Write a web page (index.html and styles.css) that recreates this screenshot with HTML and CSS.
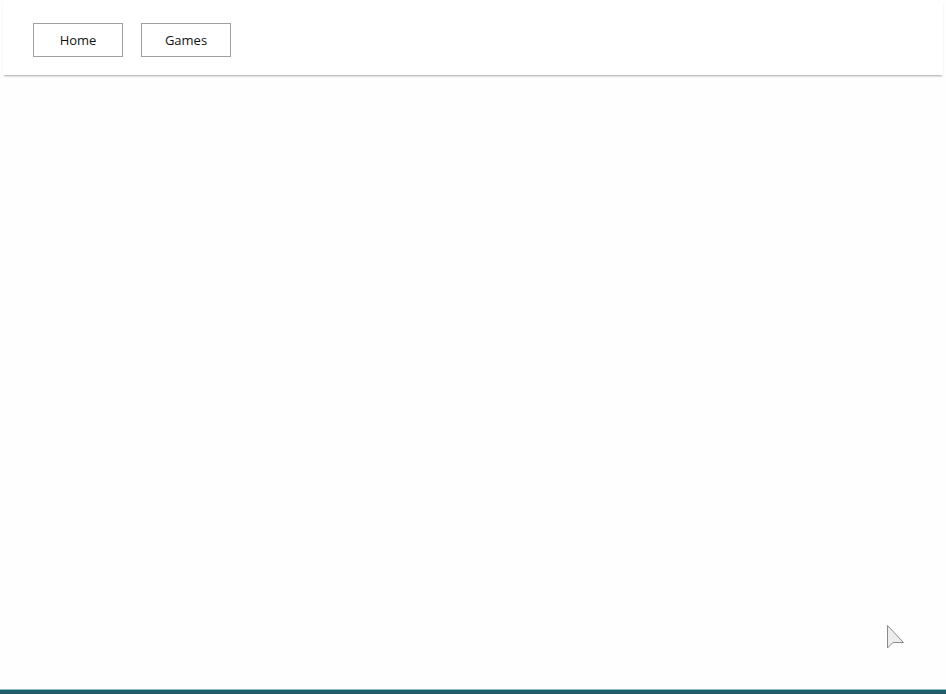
FILE: index.html
```html
<!DOCTYPE html>
<html>
<head>
<meta charset="utf-8">
<link rel="stylesheet" href="styles.css">
</head>
<body>
<div class="page">
  <header class="topbar">
    <nav class="nav">
      <button class="navbtn">Home</button>
      <button class="navbtn">Games</button>
    </nav>
  </header>
  <main class="content"></main>
  <div class="bottomline"></div>
</div>
<svg class="cursor" width="20" height="26" viewBox="0 0 20 26">
  <path d="M1.5 1.5 L1.5 24 L7 18.5 L17.5 18.5 Z" fill="#ececec" stroke="#8a8a8a" stroke-width="1"/>
</svg>
</body>
</html>
```
FILE: styles.css
```css
html, body {
  margin: 0;
  padding: 0;
  background: #fefefe;
  height: 100%;
}
body {
  font-family: "Open Sans", "Liberation Sans", sans-serif;
  overflow: hidden;
}
.page {
  display: flex;
  flex-direction: column;
  height: 694px;
}
.topbar {
  margin: 0 3px;
  height: 75px;
  background: #ffffff;
  box-shadow: 0 2px 2px -1px rgba(0,0,0,0.35);
  display: flex;
  align-items: center;
  padding-left: 30px;
  box-sizing: border-box;
}
.nav {
  display: flex;
  gap: 18px;
  margin-top: 4px;
}
.navbtn {
  width: 90px;
  height: 34px;
  background: #fff;
  border: 1px solid #a0a0a0;
  border-radius: 0;
  font-family: "Open Sans", "Liberation Sans", sans-serif;
  font-size: 13px;
  color: #111;
  padding: 0;
}
.content {
  flex: 1;
}
.bottomline {
  height: 4px;
  background: #1d5d69;
  border-top: 1px solid #8cc0c7;
}
.cursor {
  position: absolute;
  left: 886px;
  top: 624px;
}
```
